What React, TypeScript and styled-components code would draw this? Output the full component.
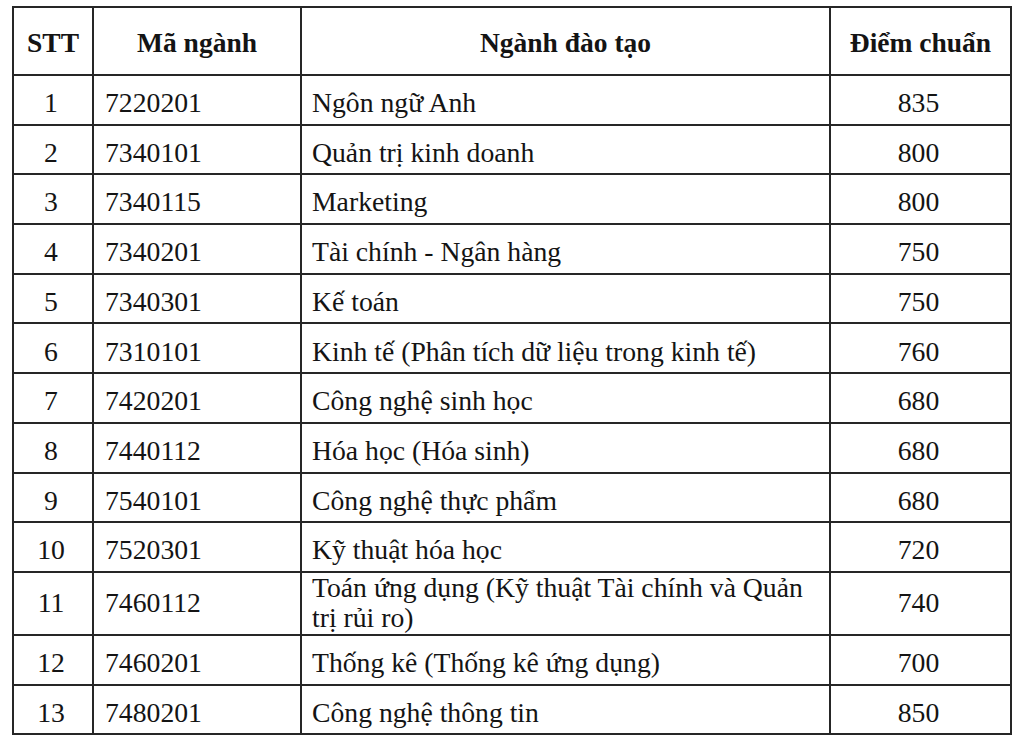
import styled, { createGlobalStyle } from "styled-components";

type RowType = {
	stt: number;
	code: string;
	name: string;
	score: number;
	tall?: boolean;
};

const rows: RowType[] = [
	{ stt: 1, code: "7220201", name: "Ngôn ngữ Anh", score: 835 },
	{ stt: 2, code: "7340101", name: "Quản trị kinh doanh", score: 800 },
	{ stt: 3, code: "7340115", name: "Marketing", score: 800 },
	{ stt: 4, code: "7340201", name: "Tài chính - Ngân hàng", score: 750 },
	{ stt: 5, code: "7340301", name: "Kế toán", score: 750 },
	{ stt: 6, code: "7310101", name: "Kinh tế (Phân tích dữ liệu trong kinh tế)", score: 760 },
	{ stt: 7, code: "7420201", name: "Công nghệ sinh học", score: 680 },
	{ stt: 8, code: "7440112", name: "Hóa học (Hóa sinh)", score: 680 },
	{ stt: 9, code: "7540101", name: "Công nghệ thực phẩm", score: 680 },
	{ stt: 10, code: "7520301", name: "Kỹ thuật hóa học", score: 720 },
	{
		stt: 11,
		code: "7460112",
		name: "Toán ứng dụng (Kỹ thuật Tài chính và Quản trị rủi ro)",
		score: 740,
		tall: true,
	},
	{ stt: 12, code: "7460201", name: "Thống kê (Thống kê ứng dụng)", score: 700 },
	{ stt: 13, code: "7480201", name: "Công nghệ thông tin", score: 850 },
];

export default function App() {
	return (
		<>
			<GlobalStyle />
			<Page>
				<Table>
					<colgroup>
						<col style={{ width: 80 }} />
						<col style={{ width: 208 }} />
						<col style={{ width: 529 }} />
						<col style={{ width: 181 }} />
					</colgroup>
					<thead>
						<HeadRow>
							<Th>STT</Th>
							<Th>Mã ngành</Th>
							<Th>Ngành đào tạo</Th>
							<Th>Điểm chuẩn</Th>
						</HeadRow>
					</thead>
					<tbody>
						{rows.map((r) => (
							<Row key={r.stt} $tall={r.tall}>
								<Td $align="center">{r.stt}</Td>
								<Td $pad={11}>{r.code}</Td>
								<Td $pad={10}>{r.name}</Td>
								<Td $align="center">{r.score}</Td>
							</Row>
						))}
					</tbody>
				</Table>
			</Page>
		</>
	);
}

const GlobalStyle = createGlobalStyle`
	html, body {
		margin: 0;
		padding: 0;
		background: #fff;
	}
`;

const Page = styled.div`
	width: 1020px;
	height: 744px;
	padding: 6px 0 0 12px;
	box-sizing: border-box;
	background: #fff;
	font-family: "Liberation Serif", "Times New Roman", serif;
	color: #141414;
`;

const Table = styled.table`
	border-collapse: collapse;
	table-layout: fixed;
	width: 998px;
	border: 2px solid #262626;
`;

const HeadRow = styled.tr`
	height: 68px;
`;

const Row = styled.tr<{ $tall?: boolean }>`
	height: ${(p) => (p.$tall ? "62.5px" : "49.7px")};

	td {
		padding-top: ${(p) => (p.$tall ? 0 : 7)}px;
	}
`;

const Th = styled.th`
	border: 2px solid #262626;
	font-size: 27.5px;
	font-weight: bold;
	text-align: center;
	padding: 4px 0 0;
	vertical-align: middle;
`;

const Td = styled.td<{ $align?: string; $pad?: number }>`
	border: 2px solid #262626;
	font-size: 27.7px;
	line-height: 30.5px;
	text-align: ${(p) => p.$align || "left"};
	padding: 7px 4px 0 ${(p) => p.$pad ?? 0}px;
	vertical-align: middle;
`;
